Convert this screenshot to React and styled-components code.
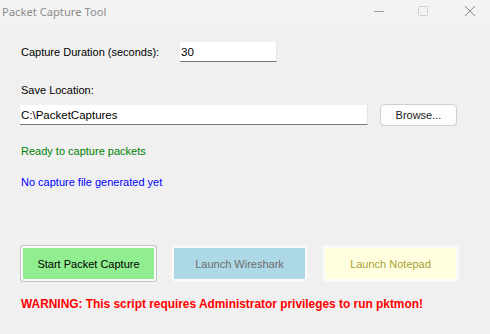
import styled, { createGlobalStyle } from 'styled-components';

const Global = createGlobalStyle`
  html, body { margin: 0; padding: 0; background: #f0f0f0; }
  body { font-family: 'Liberation Sans', Arial, sans-serif; }
`;

export default function App() {
    return (
        <Window>
            <Global />
            <TitleBar>
                <Title>Packet Capture Tool</Title>
                <Controls>
                    <Ctrl>
                        <svg width="12" height="12" viewBox="0 0 12 12"><line x1="1" y1="6.5" x2="11" y2="6.5" stroke="#9a9a9a" strokeWidth="1" /></svg>
                    </Ctrl>
                    <Ctrl>
                        <svg width="12" height="12" viewBox="0 0 12 12"><rect x="1.5" y="1.5" width="9" height="9" rx="1" fill="none" stroke="#d0d0d0" strokeWidth="1" /></svg>
                    </Ctrl>
                    <Ctrl>
                        <svg width="12" height="12" viewBox="0 0 12 12"><path d="M1 1 L11 11 M11 1 L1 11" stroke="#8a8a8a" strokeWidth="1" /></svg>
                    </Ctrl>
                </Controls>
            </TitleBar>

            <Body>
                <Row>
                    <Label style={{ width: 159 }}>Capture Duration (seconds):</Label>
                    <Field width={97} defaultValue="30" />
                </Row>

                <Label className="save">Save Location:</Label>
                <Row className="path">
                    <Field width={348} defaultValue="C:\PacketCaptures" />
                    <Browse>Browse...</Browse>
                </Row>

                <Status color="#008000" className="ready">Ready to capture packets</Status>
                <Status color="#0000ff" className="file">No capture file generated yet</Status>

                <Buttons>
                    <Action bg="#90ee90" text="#000" edge="#c4c4c4">Start Packet Capture</Action>
                    <Action bg="#add8e6" text="#6d6d6d" edge="#f7f7f7">Launch Wireshark</Action>
                    <Action bg="#ffffe0" text="#a9a23a" edge="#f7f7f7">Launch Notepad</Action>
                </Buttons>

                <Warning>WARNING: This script requires Administrator privileges to run pktmon!</Warning>
            </Body>
        </Window>
    )
}

const Window = styled.div`
    width: 490px;
    height: 334px;
    background: #f0f0f0;
    display: flex;
    flex-direction: column;
    overflow: hidden;
`

const TitleBar = styled.div`
    height: 23px;
    background: #f3f3f3;
    display: flex;
    align-items: center;
    justify-content: space-between;
    padding-left: 2px;
`

const Title = styled.div`
    font-family: 'Noto Sans', 'Open Sans', sans-serif;
    font-size: 11.2px;
    color: #8c8c8c;
`

const Controls = styled.div`
    display: flex;
    height: 100%;
    padding-right: 5px;
    gap: 14px;

    & > div:last-child{
        margin-left: 3px;
    }
`

const Ctrl = styled.div`
    width: 30px;
    display: flex;
    align-items: center;
    justify-content: center;
    margin-top: -1px;
`

const Body = styled.div`
    display: flex;
    flex-direction: column;
    padding: 19px 0 0 20px;
    font-size: 11px;
    line-height: 14px;

    .save{
        margin-top: 21px;
        margin-left: 1px;
    }
    .path{
        margin-top: 7px;
        gap: 12px;
    }
    .ready{
        margin-top: 18px;
    }
    .file{
        margin-top: 17px;
    }
`

const Row = styled.div`
    display: flex;
    align-items: center;
`

const Label = styled.div`
    color: #000;
    margin-left: 1px;
`

const Field = styled.input`
    width: ${p => p.width}px;
    height: 20px;
    box-sizing: border-box;
    border: none;
    border-bottom: 1px solid #7a7a7a;
    border-right: 1px solid #e4e4e4;
    background: #fff;
    font-family: 'Liberation Sans', Arial, sans-serif;
    font-size: 11.5px;
    color: #000;
    padding: 0 1px;
    outline: none;
`

const Browse = styled.div`
    width: 77px;
    height: 22px;
    box-sizing: border-box;
    border: 1px solid #d0d0d0;
    border-radius: 4px;
    background: #fdfdfd;
    display: flex;
    align-items: center;
    justify-content: center;
    color: #1a1a1a;
`

const Status = styled.div`
    color: ${p => p.color};
    margin-left: 1px;
`

const Buttons = styled.div`
    display: flex;
    gap: 14px;
    margin-top: 56px;
`

const Action = styled.div`
    width: 137px;
    height: 37px;
    box-sizing: border-box;
    border: 1px solid ${p => p.edge};
    border-radius: 3px;
    box-shadow: inset 0 0 0 2px #fafafa;
    background: ${p => p.bg};
    color: ${p => p.text};
    display: flex;
    align-items: center;
    justify-content: center;
`

const Warning = styled.div`
    margin-top: 15px;
    margin-left: 1px;
    color: #ff0000;
    font-weight: 700;
    font-size: 11.9px;
`
